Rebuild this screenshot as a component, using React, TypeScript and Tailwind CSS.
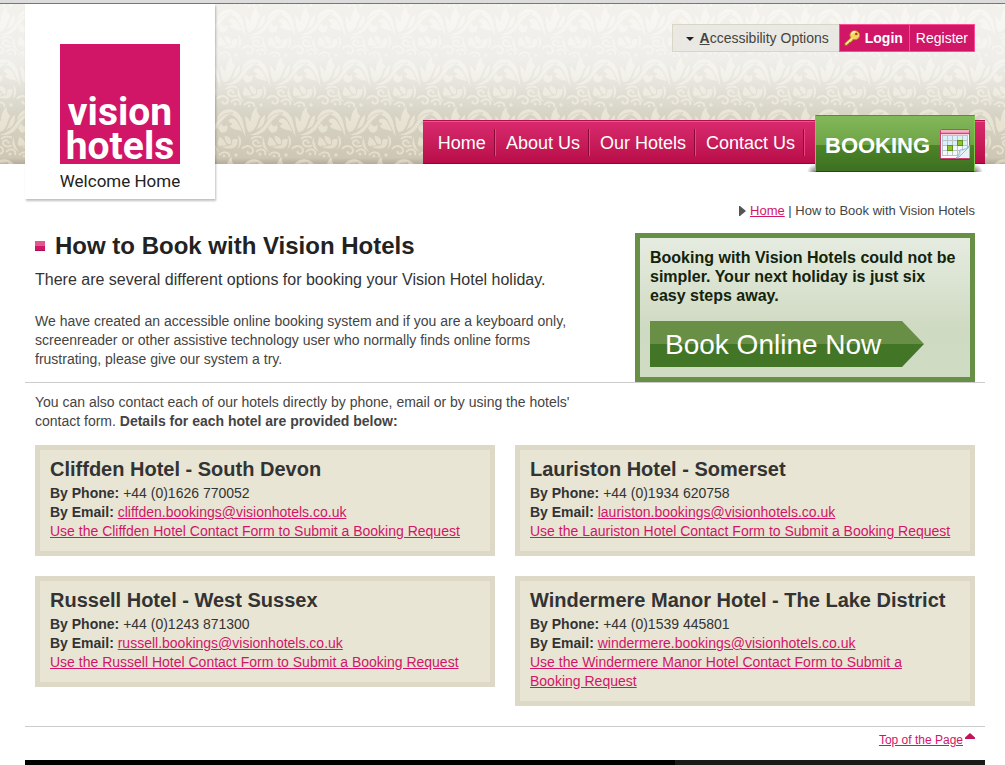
import React from "react";

type Hotel = { name: string; phone: string; email: string; form: string };

const hotels: Hotel[] = [
  { name: "Cliffden Hotel - South Devon", phone: "+44 (0)1626 770052", email: "cliffden.bookings@visionhotels.co.uk", form: "Use the Cliffden Hotel Contact Form to Submit a Booking Request" },
  { name: "Lauriston Hotel - Somerset", phone: "+44 (0)1934 620758", email: "lauriston.bookings@visionhotels.co.uk", form: "Use the Lauriston Hotel Contact Form to Submit a Booking Request" },
  { name: "Russell Hotel - West Sussex", phone: "+44 (0)1243 871300", email: "russell.bookings@visionhotels.co.uk", form: "Use the Russell Hotel Contact Form to Submit a Booking Request" },
  { name: "Windermere Manor Hotel - The Lake District", phone: "+44 (0)1539 445801", email: "windermere.bookings@visionhotels.co.uk", form: "Use the Windermere Manor Hotel Contact Form to Submit a Booking Request" },
];

const motifOffsets = [
  [-25, -50], [25, -50], [75, -50],
  [-50, 0], [0, 0], [50, 0],
  [-25, 50], [25, 50], [75, 50],
  [-50, 100], [0, 100], [50, 100],
];

const scrolls = [
  "M6 39C10 35 18 36 19 41 20 46 12 48 9 45 6 42 10 39 13 41",
  "M-3 49C1 44 8 46 8 51 7 55 1 54 3 51",
  "M11 52C16 47 22 50 20 55",
  "M24 55C29 50 36 53 34 57",
];

/* Floral damask wallpaper: one scroll motif, repeated on a half-drop grid. */
function Damask() {
  return (
    <svg className="absolute inset-0 h-full w-full" aria-hidden="true">
      <defs>
        <linearGradient id="paper" x1="0" y1="0" x2="0" y2="1">
          <stop offset="0" stopColor="#f2f1ec" />
          <stop offset=".35" stopColor="#efeeea" />
          <stop offset=".5" stopColor="#e6e4dc" />
          <stop offset=".7" stopColor="#d6d3c4" />
          <stop offset=".96" stopColor="#cec7b5" />
          <stop offset="1" stopColor="#b3ac9b" />
        </linearGradient>
        <linearGradient id="leafTone" x1="0" y1="0" x2="0" y2="1">
          <stop offset="0" stopColor="#f8f7f3" />
          <stop offset=".4" stopColor="#f4f3ee" />
          <stop offset=".7" stopColor="#e9e4d5" />
          <stop offset=".97" stopColor="#e5dcc8" />
          <stop offset="1" stopColor="#cfc7b5" />
        </linearGradient>
        <g id="motif">
          {scrolls.map((d) => (
            <g key={d} fill="none">
              <path d={d} stroke="#000" strokeWidth="4" />
              <path d={d} stroke="#fff" strokeWidth="2" />
            </g>
          ))}
          <g fill="#fff" stroke="#000" strokeWidth="1">
            <path d="M18 34C20 41 20 48 26 53 20 51 16 47 17 41Z" />
            <path d="M24 36C28 38 31 42 33 47 28 49 24 47 22 44Z" />
            <path d="M43 38C44 44 41 50 34 49 29 49 26 47 26 46 33 47 37 44 37 39Z" />
            <path d="M29 35C35 36 38 40 36 45 31 45 29 40 29 35Z" />
            <path d="M42 34C49 38 48 46 41 51 44 46 44 40 42 34Z" />
            <path d="M26 33C19 26 20 16 27 11 36 5 47 12 49 24 51 30 50 35 52 39 45 31 45 19 38 16 31 12 25 19 27 24 28 27 31 26 32 24 35 29 31 34 26 33Z" />
            <path d="M34 19C40 15 44 23 48 32 44 30 38 31 34 26L37 24 33 22Z" />
            <path d="M4 33C-1 27 1 21-1 15 3 17 4 19 5 21 6 15 7 10 12 6 12 11 13 14 16 16 12 21 14 25 8 31Z" />
            <path d="M9 31C15 26 13 19 20 14 21 19 20 23 17 27Z" />
            <path d="M1 35C10 34 16 30 20 24 24 17 30 12 38 13 31 16 27 21 23 27 18 35 10 37 1 35Z" />
          </g>
          <circle cx="13.500" cy="42.500" r="1.200" fill="#fff" />
          <circle cx="15" cy="54" r="1.500" fill="#fff" />
          <circle cx="41" cy="55" r="1.700" fill="#fff" />
          <circle cx="29" cy="56" r="1.300" fill="#fff" />
        </g>
        <pattern id="damask" width="50" height="100" patternUnits="userSpaceOnUse" x="45" y="96">
          {motifOffsets.map(([x, y]) => (
            <use key={`${x},${y}`} href="#motif" x={x} y={y} />
          ))}
        </pattern>
        <mask id="damaskMask">
          <rect width="100%" height="100%" fill="url(#damask)" />
        </mask>
      </defs>
      <rect width="100%" height="100%" fill="url(#paper)" />
      <rect width="100%" height="100%" fill="url(#leafTone)" mask="url(#damaskMask)" />
    </svg>
  );
}

function KeyIcon() {
  return (
    <svg width="16" height="16" viewBox="0 0 16 16" aria-hidden="true">
      <path d="M7.500 7 .8 13.300V15.500H3.600V14H5.200V12.500H6.800L9.800 9.500" fill="#f3c73f" stroke="#9b6a10" strokeWidth=".9" strokeLinejoin="round" />
      <ellipse cx="10.800" cy="5.200" rx="4.900" ry="4.500" fill="#f7d45a" stroke="#b8841b" strokeWidth=".9" />
      <path d="M7.500 4.500A3.500 3.500 0 0 1 11.500 1.800M2 14 8.500 8" stroke="#fff4bd" strokeWidth="1.400" fill="none" />
      <circle cx="12.300" cy="4" r="1.300" fill="#a93e42" />
    </svg>
  );
}

function CalendarIcon() {
  return (
    <svg width="32" height="32" viewBox="0 0 32 32" aria-hidden="true">
      <rect x="1" y="2" width="30" height="30" rx="1" fill="#244d16" opacity=".6" />
      <rect x="1.500" y="1.500" width="29" height="29" rx="1" fill="#fff" stroke="#d23c73" />
      <path d="M2 2h28v3H2z" fill="#f2b1c4" />
      <path d="M2 5.500h28" stroke="#d84377" strokeWidth="1.500" />
      <path d="M3 7h26v21H3z" fill="#b9c3c9" />
      {[0, 1, 2, 3].map((r) =>
        [0, 1, 2, 3, 4].map((c) => (
          <rect key={`${r}-${c}`} x={4 + c * 5} y={8 + r * 5} width="4" height="4" fill={r < 2 ? "#d9f0fb" : "#f4fafc"} />
        ))
      )}
      <rect x="8.500" y="17.500" width="5" height="5" fill="#8fc52b" stroke="#5c9310" />
      <rect x="18.500" y="12.500" width="5" height="5" fill="#8fc52b" stroke="#5c9310" />
      <path d="M17 30C20 28 20 25 21 22 25 22 29 20 30.500 17V19L20 30Z" fill="#cfe6f3" stroke="#7daecb" strokeWidth=".8" />
      <path d="M19 30C22 27 22 25 22.500 23.500 26 23 28 21 30.500 18.500V30Z" fill="#e8f3f9" />
      <path d="M19 30 30.500 18.500" stroke="#8db8d2" strokeWidth=".9" />
    </svg>
  );
}

const link = "text-[#d11567] underline";

function HotelCard({ hotel }: { hotel: Hotel }) {
  return (
    <article className="border-[5px] border-[#ddd9c6] bg-[#e8e5d5] pt-[6px] pr-[16px] pb-[10px] pl-[10px] text-[14px] leading-[19px] text-[#333]">
      <h2 className="pb-[2px] text-[20px] leading-[26px] font-bold">{hotel.name}</h2>
      <p><b>By Phone:</b> {hotel.phone}</p>
      <p><b>By Email:</b> <a className={link} href={`mailto:${hotel.email}`}>{hotel.email}</a></p>
      <p><a className={link} href="#contact">{hotel.form}</a></p>
    </article>
  );
}

function Header() {
  return (
    <header className="relative h-[160px]">
      <Damask />
      <div className="relative flex max-w-[1005px] justify-between pr-5 pl-[25px]">
        <a href="#home" className="flex h-[195px] w-[190px] shrink-0 flex-col items-center bg-white pt-[40px] font-[Roboto,sans-serif] shadow-[1px_2px_2px_rgba(0,0,0,0.25)]">
          <span className="flex h-[120px] w-[120px] flex-col items-center justify-end bg-[#d11567] pb-[1px] text-[39px] leading-[34px] font-bold text-white">
            <span>vision</span>
            <span>hotels</span>
          </span>
          <span className="mt-[5px] text-[17px] leading-[24px] text-[#222]">Welcome Home</span>
        </a>
        <div className="flex h-[160px] flex-col items-end justify-between pt-[20px]">
          <div className="mr-[10px] flex h-[28px] text-[14px] leading-[24px]">
            <button type="button" className="flex items-center gap-[6px] border border-r-0 border-[#d9d6c6] bg-[#e7e6e0]/85 pr-[10px] pl-[13px] text-[#444]">
              <svg width="8" height="5" viewBox="0 0 8 5" aria-hidden="true"><path d="M0 1h8L4 5Z" fill="#222" /></svg>
              <span><b className="underline">A</b>ccessibility Options</span>
            </button>
            <div className="flex border border-[#ff4a93] bg-[#d11567] text-white">
              <a href="#login" className="flex items-center gap-[5px] border-r border-[#ff4a93] pr-[6px] pl-[4px] font-bold"><KeyIcon />Login</a>
              <a href="#register" className="flex items-center px-[6px]">Register</a>
            </div>
          </div>
          <nav className="flex h-[44px] border-t border-b border-t-[#b60f50] border-b-[#8b0838] bg-linear-to-b from-[#d92a6f] to-[#b80c48] pr-[10px] pl-[5px] text-[18px] text-white shadow-[inset_0_1px_0_#ff4a8b]">
            {["Home", "About Us", "Our Hotels", "Contact Us"].map((t) => (
              <a key={t} href="#nav" className="flex items-center">
                <span className="pt-[2px] pr-[8px] pl-[10px]">{t}</span>
                <span className="h-[27px] w-[2px] border-r border-l border-r-[#f0417f] border-l-[#8b0838]" />
              </a>
            ))}
            <a href="#booking" className="relative -mt-[6px] -mb-[9px] ml-[10px] flex h-[57px] w-[160px] items-center justify-between border border-t-[#5b8a3c] border-r-[#7fc84f] border-b-[#25480f] border-l-[#7fc84f] bg-[linear-gradient(#82b75a_0%,#6ea346_53%,#4c8427_53%,#3d7022_100%)] pr-[3px] pl-[9px] text-[22px] font-bold">
              <svg className="absolute top-[48px] -left-[9px]" width="176" height="8" viewBox="0 0 176 8" aria-hidden="true">
                <defs>
                  <radialGradient id="shadeLeft" cx="1" cy="1" r="1"><stop offset="0" stopOpacity=".5" /><stop offset="1" stopOpacity="0" /></radialGradient>
                  <radialGradient id="shadeRight" cx="0" cy="1" r="1"><stop offset="0" stopOpacity=".5" /><stop offset="1" stopOpacity="0" /></radialGradient>
                </defs>
                <rect width="8" height="8" fill="url(#shadeLeft)" />
                <rect x="168" width="8" height="8" fill="url(#shadeRight)" />
              </svg>
              <span className="pt-[4px]">BOOKING</span>
              <CalendarIcon />
            </a>
          </nav>
        </div>
      </div>
    </header>
  );
}

export default function App() {
  return (
    <div className="bg-white font-['Liberation_Sans',Arial,sans-serif] text-[#444]">
      <div className="h-[4px] border-b border-[#777] bg-[#dcdcdc]" />
      <Header />
      <main className="max-w-[1005px] pr-5 pl-[25px] text-[14px] leading-[19px]">
        <nav aria-label="Breadcrumb" className="flex items-center justify-end gap-[4px] pt-[37px] pr-[10px] text-[13px]">
          <svg width="7" height="10" viewBox="0 0 7 10" aria-hidden="true"><path d="M0 0H1L7 5 1 10H0Z" fill="#555" /></svg>
          <p><a className={link} href="#home">Home</a> | How to Book with Vision Hotels</p>
        </nav>

        <section className="mt-[13px] flex items-start justify-between border-b border-[#ccc] pr-[10px] pl-[10px]">
          <div className="max-w-[560px]">
            <h1 className="flex items-center gap-[10px] text-[24px] leading-[26px] font-bold text-[#222]">
              <span className="h-[10px] w-[10px] border-b border-[#a90f4d] bg-[linear-gradient(#e2578f_50%,#d11567_50%)]" />
              How to Book with Vision Hotels
            </h1>
            <p className="mt-[9px] text-[16px] leading-[24px] text-[#333]">There are several different options for booking your Vision Hotel holiday.</p>
            <p className="mt-5">We have created an accessible online booking system and if you are a keyboard only, screenreader or other assistive technology user who normally finds online forms frustrating, please give our system a try.</p>
          </div>
          <aside className="w-[340px] shrink-0 border-[5px] border-[#678f45] bg-[linear-gradient(#e6ece1,#cfdac2_65%,#d0dbc4)] p-[10px]">
            <p className="text-[16px] leading-[19px] font-bold text-[#13230a]">Booking with Vision Hotels could not be simpler. Your next holiday is just six easy steps away.</p>
            <a href="#book" className="mt-[16px] flex h-[46px] w-[274px] items-center bg-[linear-gradient(#688f45_50%,#427626_50%)] pl-[15px] text-[28px] text-white [clip-path:polygon(0_0,252px_0,100%_50%,252px_100%,0_100%)]">Book Online Now</a>
          </aside>
        </section>

        <section className="px-[10px] pt-[10px]">
          <p className="max-w-[560px]">You can also contact each of our hotels directly by phone, email or by using the hotels' contact form. <b>Details for each hotel are provided below:</b></p>
          <div className="mt-[14px] grid grid-cols-2 items-start gap-5">
            {hotels.map((h) => <HotelCard key={h.name} hotel={h} />)}
          </div>
        </section>

        <div className="mt-5 flex justify-end border-t border-[#ccc] pt-[4px] pr-[10px] text-[12px]">
          <a href="#top" className="flex gap-[2px] text-[#d11567]">
            <span className="underline">Top of the Page</span>
            <svg className="mt-[2px]" width="10" height="6" viewBox="0 0 10 6" aria-hidden="true"><path d="M5 0 10 4.500V6H0V4.500Z" fill="#c21458" /></svg>
          </a>
        </div>
        <footer className="mt-[10px] flex h-[5px] bg-black">
          <div className="ml-auto w-[310px] bg-[#1b1a1a]" />
        </footer>
      </main>
    </div>
  );
}
